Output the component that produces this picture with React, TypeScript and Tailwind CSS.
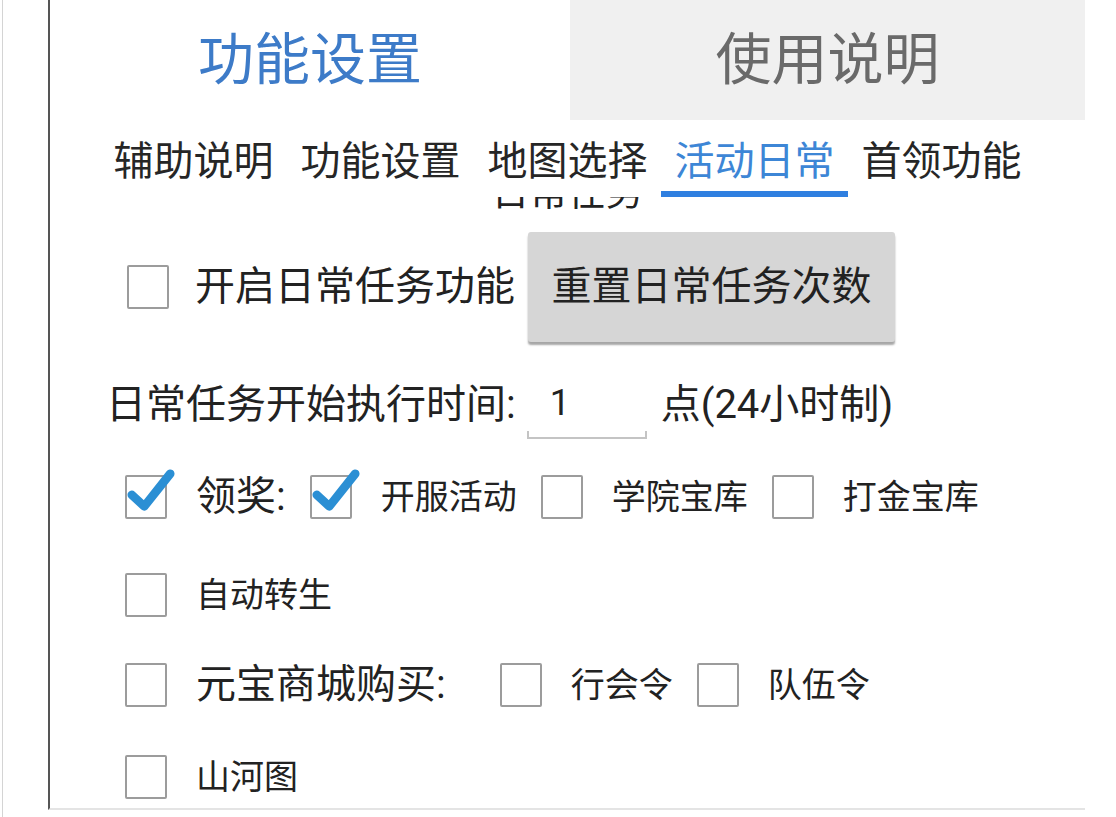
import React from "react";

const font = "font-['Roboto','Noto_Sans_CJK_SC',sans-serif]";

const Box = ({ checked = false }: { checked?: boolean }) => (
  <div className="relative w-[42px] h-[44px] shrink-0 border-2 border-[#9c9c9c] rounded-[2px] bg-white">
    {checked && (
      <svg
        className="absolute left-[-2px] top-[-10px] w-[52px] h-[48px]"
        viewBox="0 0 54 50"
      >
        <path
          d="M7 29 L20 41 L47 7"
          fill="none"
          stroke="#2b8fd4"
          strokeWidth="9"
          strokeLinecap="round"
          strokeLinejoin="round"
        />
      </svg>
    )}
  </div>
);

const Option = ({
  label,
  checked,
  big,
}: {
  label: string;
  checked?: boolean;
  big?: boolean;
}) => (
  <div className="flex items-center gap-[29px]">
    <Box checked={checked} />
    <span
      className={`${big ? "text-[40px]" : "text-[34px]"} leading-none text-[#222]`}
    >
      {label}
    </span>
  </div>
);

const tabs = ["辅助说明", "功能设置", "地图选择", "活动日常", "首领功能"];

export default function App() {
  return (
    <div className={`w-[1116px] h-[817px] bg-white flex overflow-hidden ${font}`}>
      <div className="w-[2px]" />
      <div className="w-px h-full bg-[#d4d4d4]" />
      <div className="w-[45px]" />
      <div className="w-[1037px] h-[810px] flex flex-col border-l-2 border-l-[#555] border-b-2 border-b-[#e4e4e4]">
        {/* top tabs */}
        <div className="h-[120px] flex">
          <div className="w-[520px] flex items-center justify-center text-[56px] leading-none text-[#3d7bc8]">
            功能设置
          </div>
          <div className="flex-1 flex items-center justify-center bg-[#f0f0f0] text-[56px] leading-none text-[#6a6a6a]">
            使用说明
          </div>
        </div>

        {/* sub tabs */}
        <div className="h-[77px] flex pl-[50px]">
          {tabs.map((t) => (
            <div
              key={t}
              className={`w-[187px] flex items-center justify-center pt-[13px] border-b-[6px] text-[40px] leading-none ${
                t === "活动日常"
                  ? "border-b-[#2f7fe0] text-[#3d86d6]"
                  : "border-b-transparent text-[#262626]"
              }`}
            >
              {t}
            </div>
          ))}
        </div>

        {/* scrolled section title, clipped */}
        <div className="h-[17px] overflow-hidden text-center">
          <div className="mt-[-24px] text-[38px] leading-none text-[#222]">日常任务</div>
        </div>

        {/* row 1 */}
        <div className="mt-[18px] h-[110px] flex items-center pl-[77px]">
          <Box />
          <span className="ml-[26px] text-[40px] leading-none text-[#222]">
            开启日常任务功能
          </span>
          <button className="ml-[13px] w-[367px] h-[110px] bg-[#d6d6d6] rounded-[3px] shadow-[0_3px_2px_rgba(0,0,0,0.35)] text-[40px] leading-none text-[#222]">
            重置日常任务次数
          </button>
        </div>

        {/* row 2 */}
        <div className="h-[125px] flex items-center pl-[56px]">
          <span className="text-[40px] leading-none text-[#222]">日常任务开始执行时间:</span>
          <div className="ml-[11px] w-[120px] h-[68px] flex flex-col justify-end">
            <span className="pl-[23px] text-[36px] leading-none text-[#222] mb-[10px]">1</span>
            <div className="h-[8px] border-2 border-t-0 border-[#c4c4c4]" />
          </div>
          <span className="ml-[14px] text-[40px] leading-none text-[#222]">点(24小时制)</span>
        </div>

        {/* row 3 */}
        <div className="h-[60px] flex items-center pl-[75px] gap-[24px]">
          <Option label="领奖:" checked big />
          <Option label="开服活动" checked />
          <Option label="学院宝库" />
          <Option label="打金宝库" />
        </div>

        {/* row 4 */}
        <div className="mt-[38px] h-[60px] flex items-center pl-[75px]">
          <Option label="自动转生" />
        </div>

        {/* row 5 */}
        <div className="mt-[30px] h-[60px] flex items-center pl-[75px] gap-[24px]">
          <div className="flex items-center gap-[29px]">
            <Box />
            <span className="text-[40px] leading-none text-[#222]">元宝商城购买:</span>
          </div>
          <div className="ml-[30px]">
            <Option label="行会令" />
          </div>
          <Option label="队伍令" />
        </div>

        {/* row 6 */}
        <div className="mt-[32px] h-[60px] flex items-center pl-[75px]">
          <Option label="山河图" />
        </div>
      </div>
    </div>
  );
}
